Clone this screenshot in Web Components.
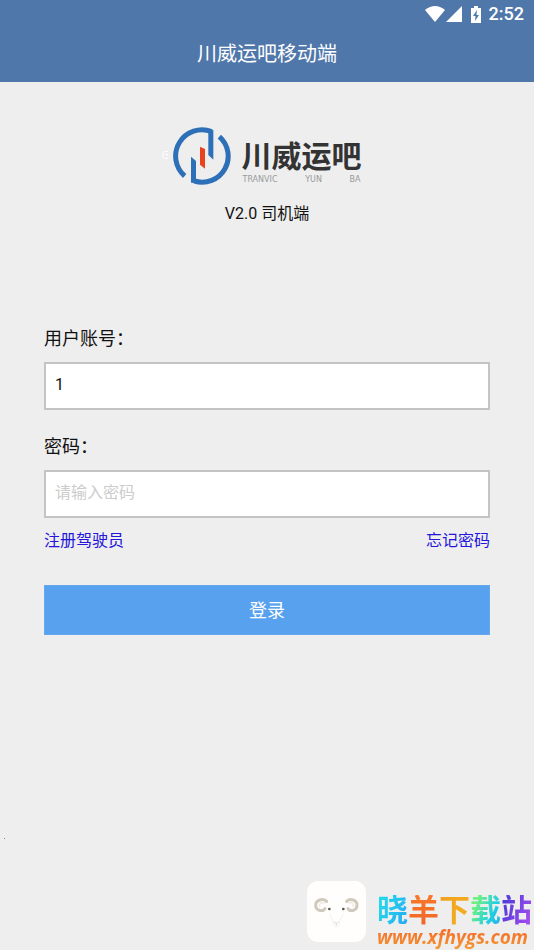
<!DOCTYPE html>
<html lang="zh-CN">
<head>
<meta charset="utf-8">
<meta name="viewport" content="width=device-width, initial-scale=1">
<title>川威运吧移动端</title>
<style>
html,body{margin:0;min-height:100%;background:#eee}
body{font-family:Roboto,"Noto Sans CJK SC",sans-serif;color:#111}
</style>
</head>
<body>
<login-page></login-page>
<script>
function define(name, html, setup){
  customElements.define(name, class extends HTMLElement{
    constructor(){
      super();
      const t=document.createElement('template');
      t.innerHTML=html;
      this.attachShadow({mode:'open'}).append(t.content.cloneNode(true));
    }
    connectedCallback(){ if(setup) setup(this,this.shadowRoot); }
  });
}

define('status-bar',`
<style>
:host{display:flex;justify-content:flex-end;align-items:center;height:24px;padding:2px 10px 0 0;color:#fff;font-size:18px;font-weight:500;line-height:24px}
svg{display:block}
.signal{margin:0 9px 0 1px}
.battery{margin-right:8px}
</style>
<svg class="wifi" width="20" height="16" viewBox="0 0 20 16" fill="#fff"><path d="M0 4Q10-4 20 4L10 16Z"/></svg>
<svg class="signal" width="16" height="16" viewBox="0 0 16 16" fill="#fff"><path d="M16 0V16H0Z"/></svg>
<svg class="battery" width="10" height="17" viewBox="0 0 10 17"><path fill="#fff" d="M3 0h4v2h3v15H0V2h3z"/><path fill="#4f77aa" d="M6 4 2 10h2.500L4 15l4-6H5.500z"/></svg>
<span>2:52</span>`);

define('app-header',`
<style>
:host{display:block;background:#4f77aa;color:#fff}
h1{margin:0;font-size:20px;line-height:32px;font-weight:400;text-align:center;padding:12px 16px}
</style>
<slot name="status"></slot><h1><slot></slot></h1>`);

define('brand-logo',`
<style>
:host{display:flex;flex-direction:column;align-items:center;gap:16px}
.logo{position:relative;display:flex;gap:10px}
svg{display:block}
.speck{position:absolute;right:100%;top:23px;margin-right:5px}
.name{display:flex;flex-direction:column;justify-content:flex-end}
.word{font:700 30px/34px "Liberation Sans","Noto Sans CJK SC",sans-serif;color:#333}
.sub{display:flex;justify-content:space-between;font:8px/12px "DejaVu Sans",sans-serif;color:#999;padding:0 1px}
.version{font-size:16px;line-height:24px}
</style>
<div class="logo">
<svg class="speck" width="6" height="10" viewBox="0 0 6 10" fill="none" stroke="#fff"><path d="M1 1v7M3 1.500h3M3 4.500h3M2 8.500h4"/></svg>
<svg width="59" height="59" viewBox="66 36 177 177"><g fill="none" stroke="#2d70b8" stroke-width="15"><path d="M182 50A79 79 0 0 0 101 183"/><path d="M205 65A78 78 0 0 1 130 198"/></g><g fill="#2d70b8"><path d="M172 48 187 45V134L172 120Z"/><path d="M120 125 135 138V204L120 203Z"/></g><path fill="#e8431f" d="M147 95 162 102V161L147 149Z"/></svg>
<div class="name"><span class="word">川威运吧</span><div class="sub"><span>TRANVIC</span> <span>YUN</span> <span>BA</span></div></div>
</div>
<div class="version"><slot></slot></div>`);

define('text-field',`
<style>
:host{display:flex;flex-direction:column;gap:11px}
label{font-size:18px;line-height:24px}
input{box-sizing:border-box;width:100%;height:48px;margin:0;padding:0 9px 3px;border:2px solid #c4c4c4;border-radius:0;background:#fff;color:#111;font:inherit;font-size:16px;outline:0}
input::placeholder{color:#ccc;opacity:1}
</style>
<label for="field"></label><input id="field">`,(host,root)=>{
  const input=root.querySelector('input');
  root.querySelector('label').textContent=host.getAttribute('label');
  input.type=host.getAttribute('type')||'text';
  input.placeholder=host.getAttribute('placeholder')||'';
  input.value=host.getAttribute('value')||'';
});

define('login-form',`
<style>
form{display:flex;flex-direction:column;gap:25px}
nav{display:flex;justify-content:space-between;margin-top:-14px;font-size:16px;line-height:24px}
a{color:#2415dc;text-decoration:none}
button{height:50px;margin-top:7px;border:1px solid #67a7ee;background:#58a1ef;color:#fff;font:inherit;font-size:18px;padding:0 0 2px}
</style>
<form onsubmit="return false">
<text-field label="用户账号：" value="1"></text-field>
<text-field label="密码：" type="password" placeholder="请输入密码"></text-field>
<nav><a href="#register">注册驾驶员</a><a href="#forgot">忘记密码</a></nav>
<button type="submit">登录</button>
</form>`);

define('site-mark',`
<style>
:host{display:flex;align-items:flex-start;gap:11px}
svg{display:block}
.text{display:flex;flex-direction:column;padding-top:14px}
.cn{display:flex;font:700 31px/31px "Liberation Sans","Noto Sans CJK SC",sans-serif}
.cn span{color:transparent;background-clip:text;-webkit-background-clip:text;padding-bottom:2px;margin-bottom:-2px}
.a{background-image:linear-gradient(115deg,#20e0e8,#28a8f4)}
.b{background-image:linear-gradient(#f87828,#f06428)}
.c{background-image:linear-gradient(110deg,#f0a020,#f4b020)}
.d{background-image:linear-gradient(115deg,#70f080 20%,#20d0e0 65%,#28a8f0)}
.e{background-image:linear-gradient(115deg,#4038d8,#b050f0)}
.url{font:italic 700 19px/22px "Open Sans",sans-serif;color:transparent;background:linear-gradient(#f46428,#f49a32);background-clip:text;-webkit-background-clip:text;text-decoration:none;padding-bottom:2px}
</style>
<svg width="59" height="61" viewBox="0 0 177 183"><rect width="177" height="183" rx="34" fill="#fffefc"/><g fill="none" stroke-linecap="round"><path stroke="#d0c9bd" stroke-width="9" d="M59 61C48 50 25 57 26 74c1 17 23 18 28 9"/><path stroke="#d0c9bd" stroke-width="9" d="M119 61C130 50 151 57 150 74c-1 17-22 18-27 9"/><path stroke="#eee9df" stroke-width="4" d="M53 66c-10-5-18 4-15 11M125 66c9-5 16 4 13 11"/><path stroke="#eeeae4" stroke-width="2" d="M68 98C70 112 79 116 79 127c0 13 18 13 18 0 0-11 9-16 11-29"/></g><circle cx="67" cy="84" r="4" fill="#555"/><circle cx="109" cy="84" r="4" fill="#555"/><path d="M81 123l7 4 7-4M88 127v7" fill="none" stroke="#ccc5bf" stroke-width="2"/></svg>
<div class="text"><div class="cn"><span class="a">晓</span><span class="b">羊</span><span class="c">下</span><span class="d">载</span><span class="e">站</span></div><a class="url" href="#site">www.xfhygs.com</a></div>`);

define('login-page',`
<style>
:host{display:flex;flex-direction:column;min-height:100vh;position:relative;background:#eee}
main{padding:45px 44px 120px;display:flex;flex-direction:column;gap:101px}
site-mark{position:absolute;right:2px;bottom:0}
.dot{position:absolute;left:4px;bottom:111px;width:1px;height:1px;background:#888}
</style>
<app-header><status-bar slot="status"></status-bar>川威运吧移动端</app-header>
<main><brand-logo>V2.0 司机端</brand-logo><login-form></login-form></main>
<i class="dot"></i><site-mark></site-mark>`);
</script>
</body>
</html>
